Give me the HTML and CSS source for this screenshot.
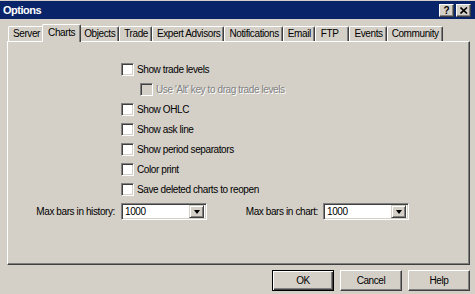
FILE: index.html
```html
<!DOCTYPE html>
<html lang="en">
<head>
    <meta charset="UTF-8">
    <title>Options</title>
    <link rel="stylesheet" href="styles.css">
</head>
<body>
    <div class="window">
        <!-- Title bar -->
        <div class="titlebar">
            <span class="title">Options</span>
            <div class="title-btns">
                <span class="tbtn">?</span>
                <span class="tbtn">
                    <svg width="8" height="7" viewBox="0 0 8 7"><path d="M0.5 0.5 L7 6.5 M7 0.5 L0.5 6.5" stroke="#000" stroke-width="1.6"/></svg>
                </span>
            </div>
        </div>

        <!-- Tabs -->
        <div class="tabs">
            <div class="tab">Server</div>
            <div class="tab active">Charts</div>
            <div class="tab">Objects</div>
            <div class="tab">Trade</div>
            <div class="tab">Expert Advisors</div>
            <div class="tab">Notifications</div>
            <div class="tab">Email</div>
            <div class="tab wide">FTP</div>
            <div class="tab">Events</div>
            <div class="tab">Community</div>
        </div>

        <!-- Charts page -->
        <div class="panel">
            <div class="options">
                <div class="check-row"><span class="box"></span>Show trade levels</div>
                <div class="check-row sub disabled"><span class="box"></span>Use 'Alt' key to drag trade levels</div>
                <div class="check-row"><span class="box"></span>Show OHLC</div>
                <div class="check-row"><span class="box"></span>Show ask line</div>
                <div class="check-row"><span class="box"></span>Show period separators</div>
                <div class="check-row"><span class="box"></span>Color print</div>
                <div class="check-row"><span class="box"></span>Save deleted charts to reopen</div>
            </div>

            <div class="limits">
                <div class="field">
                    <label class="field-label">Max bars in history:</label>
                    <div class="combo">
                        <span class="combo-value">1000</span>
                        <span class="drop"><span class="arrow"></span></span>
                    </div>
                </div>
                <div class="field second">
                    <label class="field-label">Max bars in chart:</label>
                    <div class="combo">
                        <span class="combo-value">1000</span>
                        <span class="drop"><span class="arrow"></span></span>
                    </div>
                </div>
            </div>
        </div>

        <!-- Dialog buttons -->
        <div class="buttons">
            <button class="btn default">OK</button>
            <button class="btn">Cancel</button>
            <button class="btn">Help</button>
        </div>
    </div>
</body>
</html>
```

FILE: styles.css
```css
/* Classic Windows dialog look */
* {
    box-sizing: border-box;
    margin: 0;
    padding: 0;
}

body {
    background-color: #d4d0c8;
    font-family: "Liberation Sans", Arial, sans-serif;
    font-size: 10px;
    letter-spacing: -0.4px;
    color: #000000;
}

.window {
    width: 475px;
    height: 294px;
    border-top: 1px solid #d4d0c8;
}

/* Title bar */
.titlebar {
    height: 18px;
    background-color: #0a246a;
    color: #ffffff;
    display: flex;
    align-items: center;
    justify-content: space-between;
    padding: 0 4px 0 3px;
}

.title {
    font-weight: bold;
    font-size: 11px;
    letter-spacing: -0.5px;
}

.title-btns {
    display: flex;
    gap: 2px;
}

.tbtn {
    width: 15px;
    height: 13px;
    background-color: #d4d0c8;
    border: 1px solid;
    border-color: #ffffff #404040 #404040 #ffffff;
    box-shadow: inset -1px -1px #808080;
    color: #000000;
    font-weight: bold;
    font-size: 10px;
    letter-spacing: 0;
    display: flex;
    align-items: center;
    justify-content: center;
}

/* Tabs */
.tabs {
    display: flex;
    align-items: flex-end;
    height: 18px;
    margin: 4px 0 0 8px;
}

.tab {
    flex-shrink: 0;
    height: 15px;
    line-height: 14px;
    padding: 0 3px 0 4px;
    white-space: nowrap;
    border-top: 1px solid #ffffff;
    border-left: 1px solid #ffffff;
    border-right: 1px solid #404040;
    box-shadow: inset -1px 0 #808080;
    border-radius: 2px 2px 0 0;
}

.tab.wide {
    padding: 0 10px 0 5px;
}

.tab.active {
    height: 18px;
    line-height: 15px;
    margin: 0 -2px -1px;
    padding: 0 5px;
    background-color: #d4d0c8;
    position: relative;
    z-index: 1;
}

/* Page panel */
.panel {
    height: 224px;
    margin: 0 5px 0 7px;
    border-top: 1px solid #ffffff;
    border-left: 1px solid #ffffff;
    border-right: 1px solid #404040;
    border-bottom: 1px solid #404040;
    box-shadow: inset -1px -1px #808080;
}

.options {
    padding: 17px 0 0 113px;
}

.check-row {
    height: 20px;
    display: flex;
    align-items: center;
    gap: 3px;
    white-space: nowrap;
}

.box {
    flex-shrink: 0;
    width: 13px;
    height: 13px;
    background-color: #ffffff;
    border: 1px solid;
    border-color: #808080 #ffffff #ffffff #808080;
    box-shadow: inset 1px 1px #404040, inset -1px -1px #d4d0c8;
}

.check-row.sub {
    margin-left: 19px;
}

.check-row.disabled {
    color: #808080;
    text-shadow: 1px 1px #ffffff;
}

.check-row.disabled .box {
    background-color: #d4d0c8;
}

/* History limits */
.limits {
    display: flex;
    align-items: center;
    margin-top: 4px;
}

.field {
    width: 199px;
    display: flex;
    align-items: center;
    justify-content: flex-end;
    gap: 6px;
}

.field.second {
    width: 202px;
    gap: 5px;
}

.field-label {
    white-space: nowrap;
}

.combo {
    flex-shrink: 0;
    width: 86px;
    height: 17px;
    display: flex;
    align-items: center;
    justify-content: space-between;
    background-color: #ffffff;
    border: 1px solid;
    border-color: #808080 #ffffff #ffffff #808080;
    box-shadow: inset 1px 1px #404040, inset -1px -1px #d4d0c8;
    padding: 1px 2px 1px 3px;
}

.drop {
    width: 15px;
    height: 13px;
    background-color: #d4d0c8;
    border: 1px solid;
    border-color: #d4d0c8 #404040 #404040 #d4d0c8;
    box-shadow: inset 1px 1px #ffffff, inset -1px -1px #808080;
    display: flex;
    align-items: center;
    justify-content: center;
}

.arrow {
    width: 0;
    height: 0;
    border-left: 3.5px solid transparent;
    border-right: 3.5px solid transparent;
    border-top: 4px solid #000000;
}

/* Dialog buttons */
.buttons {
    display: flex;
    justify-content: flex-end;
    gap: 6px;
    margin: 5px 5px 0 0;
}

.btn {
    width: 62px;
    height: 21px;
    font-family: inherit;
    font-size: 10px;
    letter-spacing: -0.4px;
    color: #000000;
    background-color: #d4d0c8;
    border: 1px solid;
    border-color: #ffffff #404040 #404040 #ffffff;
    box-shadow: inset -1px -1px #808080;
}

.btn.default {
    border-color: #000000;
    box-shadow: inset 1px 1px #ffffff, inset -1px -1px #404040, inset -2px -2px #808080;
}
```
